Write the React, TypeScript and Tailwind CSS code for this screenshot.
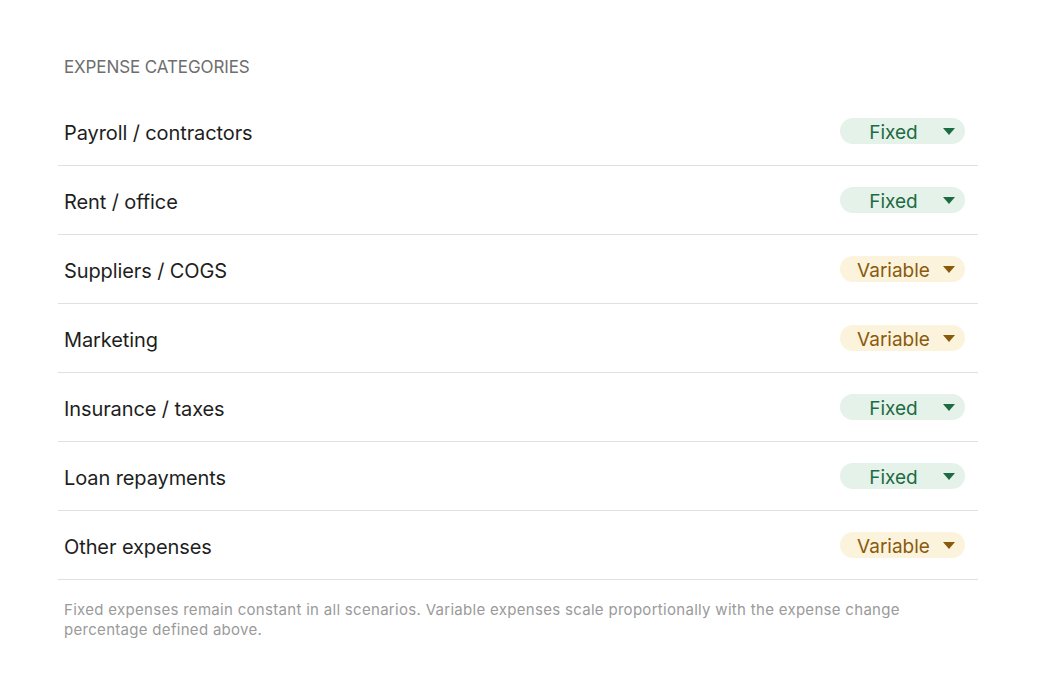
import { useState } from 'react';

type Kind = 'Fixed' | 'Variable';

interface Category {
    id: number;
    name: string;
    kind: Kind;
}

const initial: Category[] = [
    { id: 1, name: 'Payroll / contractors', kind: 'Fixed' },
    { id: 2, name: 'Rent / office', kind: 'Fixed' },
    { id: 3, name: 'Suppliers / COGS', kind: 'Variable' },
    { id: 4, name: 'Marketing', kind: 'Variable' },
    { id: 5, name: 'Insurance / taxes', kind: 'Fixed' },
    { id: 6, name: 'Loan repayments', kind: 'Fixed' },
    { id: 7, name: 'Other expenses', kind: 'Variable' },
];

function KindPill({ kind, onToggle }: { kind: Kind; onToggle: () => void }) {
    const fixed = kind === 'Fixed';
    return (
        <button
            onClick={onToggle}
            className={`flex items-center w-[125px] h-[26px] rounded-full pl-[12px] pr-[10px] text-[19px] leading-none ${fixed ? 'bg-[#e5f2ea] text-[#1c6b43]' : 'bg-[#fcf3dc] text-[#8a5a0c]'
                }`}
        >
            <span className="flex-1 text-center pt-[2px]">{kind}</span>
            {/* caret */}
            <svg width="12" height="7" viewBox="0 0 12 7" className="ml-2">
                <path d="M0 0 L12 0 L6 7 Z" fill="currentColor" />
            </svg>
        </button>
    );
}

export default function App() {
    const [cats, setCats] = useState<Category[]>(initial);

    const toggle = (id: number) => {
        setCats(cs => cs.map(c => c.id === id ? { ...c, kind: c.kind === 'Fixed' ? 'Variable' : 'Fixed' } : c));
    };

    return (
        <div className="w-[1052px] h-[692px] bg-white font-['Inter','Noto_Sans',sans-serif]">
            <div className="pt-[57px] pl-[58px] w-[978px]">
                <h3 className="pl-[6px] text-[17px] leading-[20px] text-[#6e6e6e] tracking-[-0.1px]">EXPENSE CATEGORIES</h3>

                <div className="mt-[20px]">
                    {cats.map(c => (
                        <div key={c.id} className="flex items-center justify-between h-[69px] border-b-[1.5px] border-[#e0e0e0] pl-[6px] pr-[13px]">
                            <span className="text-[20px] text-[#1e1e1e] tracking-[-0.1px] pt-[4px]">{c.name}</span>
                            <KindPill kind={c.kind} onToggle={() => toggle(c.id)} />
                        </div>
                    ))}
                </div>

                <p className="mt-[20px] pl-[6px] w-[880px] text-[15px] leading-[20px] text-[#9a9a9a] tracking-[0.3px]">
                    Fixed expenses remain constant in all scenarios. Variable expenses scale proportionally with the expense change percentage defined above.
                </p>
            </div>
        </div>
    );
}
